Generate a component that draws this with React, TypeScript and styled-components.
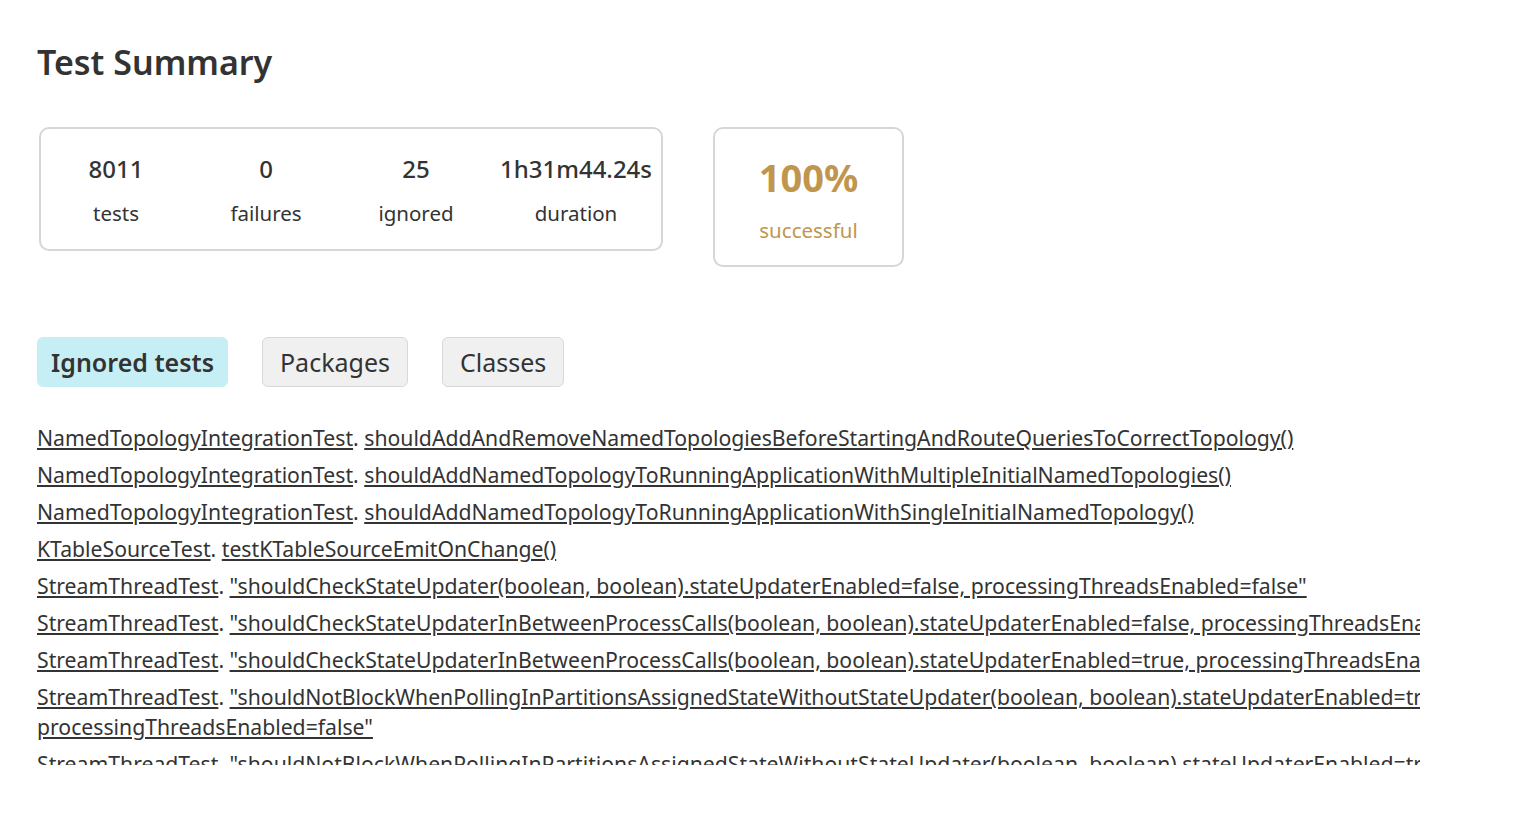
import React from "react";
import styled, { createGlobalStyle } from "styled-components";

const GlobalStyle = createGlobalStyle`
  html, body {
    margin: 0;
    padding: 0;
    background: #ffffff;
  }
  body {
    font-family: "Noto Sans", "Liberation Sans", Arial, sans-serif;
    color: #333333;
  }
`;

interface Stat {
  value: string;
  label: string;
}

interface IgnoredTest {
  cls: string;
  method: string;
}

const stats: Stat[] = [
  { value: "8011", label: "tests" },
  { value: "0", label: "failures" },
  { value: "25", label: "ignored" },
  { value: "1h31m44.24s", label: "duration" },
];

const tabs = ["Ignored tests", "Packages", "Classes"];

const ignored: IgnoredTest[] = [
  { cls: "NamedTopologyIntegrationTest", method: "shouldAddAndRemoveNamedTopologiesBeforeStartingAndRouteQueriesToCorrectTopology()" },
  { cls: "NamedTopologyIntegrationTest", method: "shouldAddNamedTopologyToRunningApplicationWithMultipleInitialNamedTopologies()" },
  { cls: "NamedTopologyIntegrationTest", method: "shouldAddNamedTopologyToRunningApplicationWithSingleInitialNamedTopology()" },
  { cls: "KTableSourceTest", method: "testKTableSourceEmitOnChange()" },
  { cls: "StreamThreadTest", method: "\"shouldCheckStateUpdater(boolean, boolean).stateUpdaterEnabled=false, processingThreadsEnabled=false\"" },
  { cls: "StreamThreadTest", method: "\"shouldCheckStateUpdaterInBetweenProcessCalls(boolean, boolean).stateUpdaterEnabled=false, processingThreadsEnabled=false\"" },
  { cls: "StreamThreadTest", method: "\"shouldCheckStateUpdaterInBetweenProcessCalls(boolean, boolean).stateUpdaterEnabled=true, processingThreadsEnabled=false\"" },
  { cls: "StreamThreadTest", method: "\"shouldNotBlockWhenPollingInPartitionsAssignedStateWithoutStateUpdater(boolean, boolean).stateUpdaterEnabled=true, processingThreadsEnabled=false\"" },
  { cls: "StreamThreadTest", method: "\"shouldNotBlockWhenPollingInPartitionsAssignedStateWithoutStateUpdater(boolean, boolean).stateUpdaterEnabled=true, processingThreadsEnabled=true\"" },
];

export default function App() {
  return (
    <>
      <GlobalStyle />
      <Page>
        <Title>Test Summary</Title>
        <SummaryRow>
          <StatsBox>
            {stats.map((s) => (
              <StatCell key={s.label}>
                <StatValue>{s.value}</StatValue>
                <StatLabel>{s.label}</StatLabel>
              </StatCell>
            ))}
          </StatsBox>
          <RateBox>
            <RateValue>100%</RateValue>
            <RateLabel>successful</RateLabel>
          </RateBox>
        </SummaryRow>
        <Tabs>
          {tabs.map((t, i) => (
            <Tab key={t} $active={i === 0}>
              {t}
            </Tab>
          ))}
        </Tabs>
        <ListClip>
          <List>
            {ignored.map((t, i) => (
              <Item key={i}>
                <Link href="#">{t.cls}</Link>. <Link href="#">{t.method}</Link>
              </Item>
            ))}
          </List>
        </ListClip>
      </Page>
    </>
  );
}

const Page = styled.div`
  padding: 38px 0 0 37px;
`;

const Title = styled.h1`
  margin: 0;
  font-size: 34px;
  font-weight: 600;
  line-height: 48px;
  color: #333;
`;

const SummaryRow = styled.div`
  display: flex;
  align-items: flex-start;
  gap: 50px;
  margin-top: 41px;
  margin-left: 2px;
`;

const StatsBox = styled.div`
  display: grid;
  grid-template-columns: 150px 150px 150px 170px;
  padding: 18px 0 14px;
  border: 2px solid #d6d6d6;
  border-radius: 10px;
`;

const StatCell = styled.div`
  display: flex;
  flex-direction: column;
  align-items: center;
`;

const StatValue = styled.div`
  font-size: 24px;
  font-weight: 500;
  line-height: 44px;
  color: #333;
`;

const StatLabel = styled.div`
  font-size: 20.5px;
  line-height: 44px;
  color: #333;
`;

const RateBox = styled.div`
  display: flex;
  flex-direction: column;
  align-items: center;
  width: 187px;
  padding: 20px 0 10px;
  border: 2px solid #d6d6d6;
  border-radius: 10px;
  color: #c0964e;
`;

const RateValue = styled.div`
  font-size: 38px;
  font-weight: 700;
  line-height: 56px;
`;

const RateLabel = styled.div`
  font-size: 20.5px;
  line-height: 50px;
`;

const Tabs = styled.div`
  display: flex;
  gap: 34px;
  margin-top: 70px;
`;

const Tab = styled.div<{ $active?: boolean }>`
  box-sizing: border-box;
  padding: 0 ${(p) => (p.$active ? "13px" : "17px")};
  height: 50px;
  display: flex;
  align-items: center;
  font-size: 25px;
  font-weight: ${(p) => (p.$active ? 600 : 400)};
  color: #333;
  border-radius: 6px;
  background: ${(p) => (p.$active ? "#c6eff5" : "#f0f0f0")};
  border: 1px solid ${(p) => (p.$active ? "#c6eff5" : "#d8d8d8")};
`;

const ListClip = styled.div`
  margin-top: 36px;
  width: 1383px;
  height: 342px;
  overflow: hidden;
`;

const List = styled.ul`
  list-style: none;
  margin: 0;
  padding: 0;
  width: 1600px;
`;

const Item = styled.li`
  font-size: 21.2px;
  line-height: 30px;
  margin-bottom: 7px;
  color: #333;
`;

const Link = styled.a`
  color: #333;
  text-decoration: underline;
`;
